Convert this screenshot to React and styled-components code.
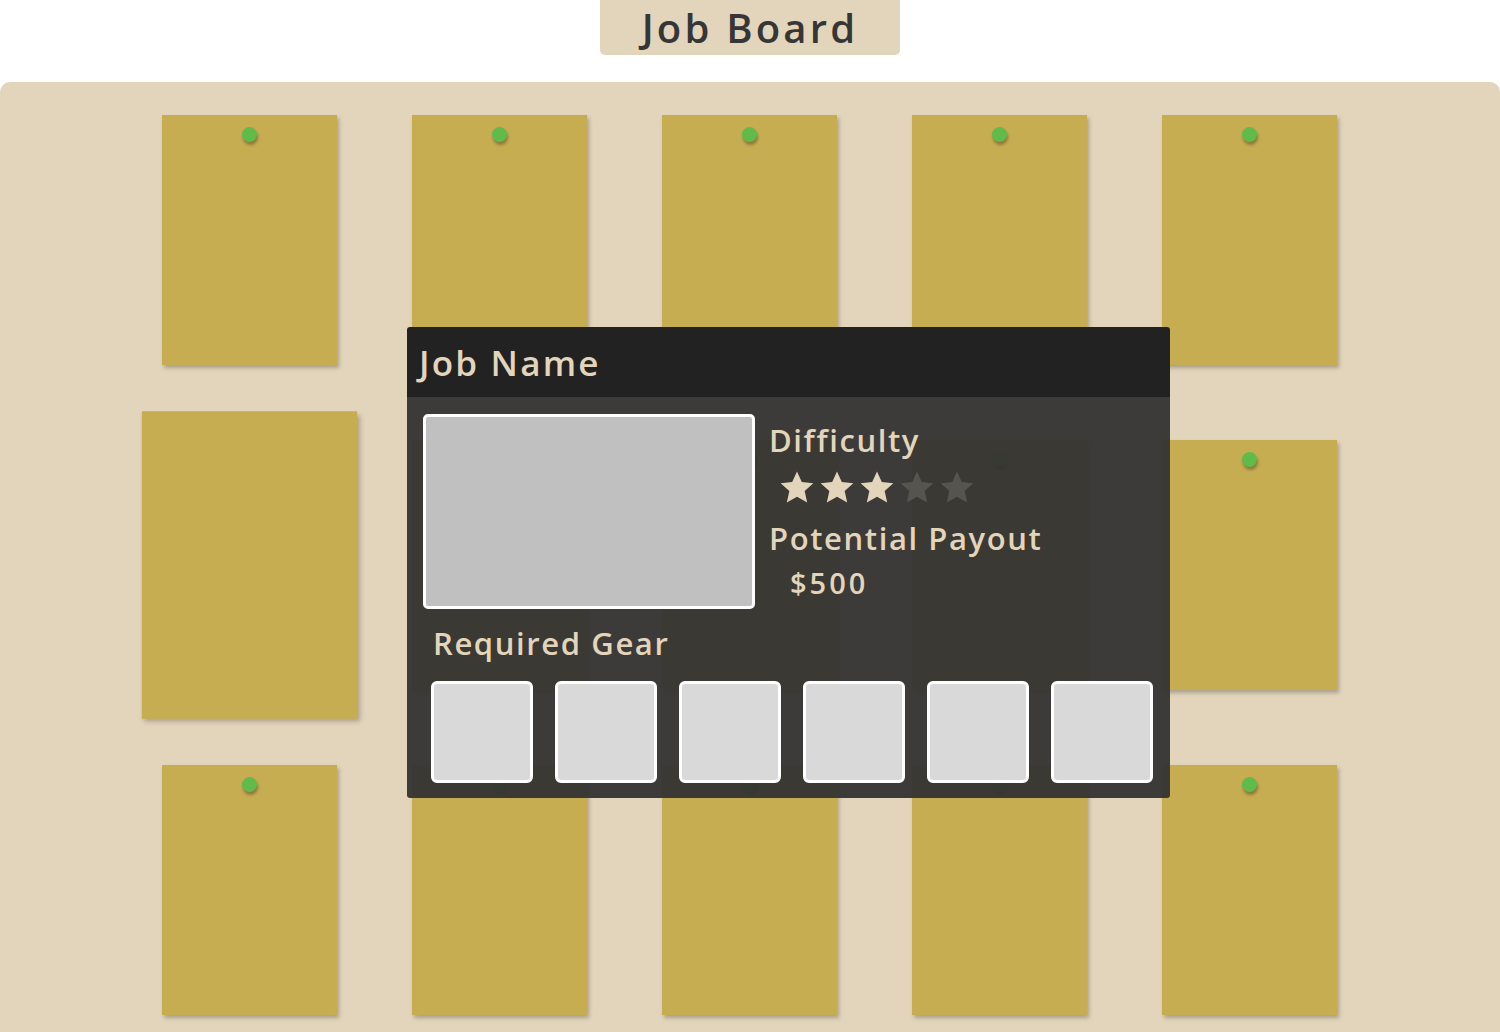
import React from 'react'
import styled, { createGlobalStyle } from 'styled-components'

const Global = createGlobalStyle`
  html, body {
    margin: 0;
    padding: 0;
    background: #fff;
    overflow: hidden;
  }
  body {
    font-family: "Open Sans", "DejaVu Sans", sans-serif;
  }
`

const Page = styled.div`
  width: 1500px;
  height: 1032px;
  overflow: hidden;
  display: flex;
  flex-direction: column;
  align-items: center;
`

const Title = styled.h1`
  flex-shrink: 0;
  margin: 0;
  width: 300px;
  height: 55px;
  background: #e3d5bb;
  border-radius: 0 0 5px 5px;
  color: #363636;
  font-size: 40px;
  font-weight: 600;
  line-height: 55px;
  text-align: center;
  letter-spacing: 3.2px;
`

const Board = styled.section`
  flex-shrink: 0;
  position: relative;
  margin-top: 27px;
  width: 1500px;
  background: #e3d5bb;
  border-radius: 10px 10px 0 0;
  padding: 33px 0 40px 162px;
  box-sizing: border-box;
`

const Grid = styled.div`
  display: grid;
  grid-template-columns: repeat(5, 175px);
  grid-auto-rows: 250px;
  column-gap: 75px;
  row-gap: 75px;
`

const Note = styled.div`
  position: relative;
  background: #c6ad52;
  box-shadow: 2px 3px 4px rgba(0, 0, 0, 0.25);
  transform: ${p => (p.$lifted ? 'scale(1.23)' : 'none')};
`

const Pin = styled.span`
  position: absolute;
  top: 12px;
  left: 50%;
  width: 15px;
  height: 15px;
  margin-left: -7.5px;
  border-radius: 50%;
  background: #61bb4b;
  box-shadow: 1px 3px 3px rgba(0, 0, 0, 0.3);
`

const Dialog = styled.div`
  position: absolute;
  left: 407px;
  top: 245px;
  width: 763px;
  border-radius: 3px;
  overflow: hidden;
  color: #e3d5bb;
`

const Header = styled.div`
  height: 70px;
  background: #222;
  padding: 0 12px;
  display: flex;
  align-items: center;
  font-size: 35px;
  font-weight: 600;
  letter-spacing: 2.2px;
`

const Body = styled.div`
  background: rgba(52, 51, 49, 0.95);
  padding: 17px 16px 15px;
`

const TopRow = styled.div`
  display: flex;
  gap: 14px;
`

const Picture = styled.div`
  width: 326px;
  height: 189px;
  border: 3px solid #fff;
  border-radius: 5px;
  background: #c0c0c0;
`

const Info = styled.div`
  display: flex;
  flex-direction: column;
  padding-top: 6px;
`

const Label = styled.div`
  font-size: 31px;
  font-weight: 600;
  line-height: 40px;
  letter-spacing: 1.6px;
  padding-left: ${p => p.$indent || 0}px;
  margin-top: ${p => p.$gapTop || 0}px;
`

const Stars = styled.div`
  display: flex;
  gap: 4px;
  padding-left: 10px;
  height: 46px;
  align-items: center;
  margin: 4px 0 8px;
`

const Money = styled.div`
  font-size: 29px;
  font-weight: 600;
  padding-left: 21px;
  margin-top: 7px;
  line-height: 36px;
  letter-spacing: 3px;
`

const GearRow = styled.div`
  display: flex;
  gap: 22px;
  margin-top: 18px;
  padding-left: 8px;
`

const Slot = styled.div`
  width: 96px;
  height: 96px;
  border: 3px solid #fff;
  border-radius: 6px;
  background: #d9d9d9;
`

const Star = ({ on }) => (
  <svg width="36" height="35" viewBox="0 0 24 23">
    <path
      d="M12 0.8l3.2 7.1 7.7 0.8-5.8 5.2 1.7 7.6L12 17.6l-6.8 3.9 1.7-7.6-5.8-5.2 7.7-0.8z"
      fill={on ? '#e3d5bb' : '#55544f'}
    />
  </svg>
)

const notes = Array.from({ length: 15 }, (_, i) => i)

const App = () => (
  <Page>
    <Global />
    <Title>Job Board</Title>
    <Board>
      <Grid>
        {notes.map(i => (
          <Note key={i} $lifted={i === 5}>
            {i !== 5 && <Pin />}
          </Note>
        ))}
      </Grid>
      <Dialog>
        <Header>Job Name</Header>
        <Body>
          <TopRow>
            <Picture />
            <Info>
              <Label>Difficulty</Label>
              <Stars>
                {[1, 2, 3, 4, 5].map(n => (
                  <Star key={n} on={n <= 3} />
                ))}
              </Stars>
              <Label>Potential Payout</Label>
              <Money>$500</Money>
            </Info>
          </TopRow>
          <Label $indent={10} $gapTop={14}>Required Gear</Label>
          <GearRow>
            {[0, 1, 2, 3, 4, 5].map(n => (
              <Slot key={n} />
            ))}
          </GearRow>
        </Body>
      </Dialog>
    </Board>
  </Page>
)

export default App
